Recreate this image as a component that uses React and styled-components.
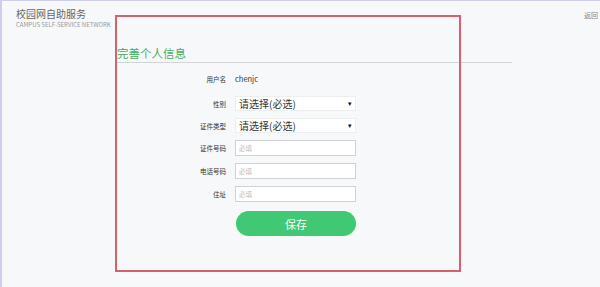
import styled, { createGlobalStyle } from "styled-components";

const Global = createGlobalStyle`
  html, body {
    margin: 0;
    padding: 0;
    background: #f6f8f9;
    font-family: "Noto Sans CJK SC", "Noto Sans", sans-serif;
  }
  * { box-sizing: border-box; }
`;

export default () => {
  return (
    <Page>
      <Global />
      <Header>
        <Brand>
          <BrandTitle>校园网自助服务</BrandTitle>
          <BrandSub>CAMPUS SELF-SERVICE NETWORK</BrandSub>
        </Brand>
        <Back>返回</Back>
      </Header>

      <Main>
        <Title>完善个人信息</Title>
        <Form>
          <Row first>
            <Label>用户名</Label>
            <Value>chenjc</Value>
          </Row>
          <Row>
            <Label>性别</Label>
            <Select>
              请选择(必选)
              <Caret>▾</Caret>
            </Select>
          </Row>
          <Row>
            <Label>证件类型</Label>
            <Select>
              请选择(必选)
              <Caret>▾</Caret>
            </Select>
          </Row>
          <Row>
            <Label>证件号码</Label>
            <Input placeholder="必填" />
          </Row>
          <Row>
            <Label>电话号码</Label>
            <Input placeholder="必填" />
          </Row>
          <Row>
            <Label>住址</Label>
            <Input placeholder="必填" />
          </Row>
          <Row>
            <Label />
            <SaveBtn>保存</SaveBtn>
          </Row>
        </Form>
      </Main>

      <Highlight />
    </Page>
  );
};

const Page = styled.div`
  position: relative;
  width: 600px;
  height: 287px;
  overflow: hidden;
  border-top: 1px solid #cfcdec;
  border-left: 2px solid #cfcdec;
  background: #f6f8f9;
`;

const Header = styled.div`
  display: flex;
  justify-content: space-between;
  align-items: flex-start;
  padding: 6px 2px 0 14px;
`;

const Brand = styled.div`
  display: flex;
  flex-direction: column;
`;

const BrandTitle = styled.div`
  font-size: 10px;
  line-height: 14px;
  color: #666;
`;

const BrandSub = styled.div`
  font-size: 6px;
  line-height: 8px;
  color: #999;
`;

const Back = styled.div`
  font-size: 7px;
  line-height: 10px;
  margin-top: 3px;
  color: #888;
  width: 14px;
  overflow: hidden;
  white-space: nowrap;
`;

const Main = styled.div`
  margin-left: 115px;
  width: 395px;
  padding-top: 16px;
`;

const Title = styled.div`
  font-size: 11.5px;
  line-height: 16px;
  color: #44ad62;
  padding-bottom: 1px;
  border-bottom: 1px solid #d2d4d6;
`;

const Form = styled.div`
  display: flex;
  flex-direction: column;
  gap: 7px;
  margin-top: 8px;
`;

const Row = styled.div`
  display: grid;
  grid-template-columns: 109px 121px;
  column-gap: 9px;
  align-items: center;
  margin-bottom: ${(p) => (p.first ? "2px" : "0")};
  &:last-child {
    margin-top: 2px;
  }
`;

const Label = styled.div`
  font-size: 6.5px;
  color: #333;
  text-align: right;
`;

const Value = styled.div`
  font-size: 7.5px;
  line-height: 16px;
  color: #333;
`;

const Select = styled.div`
  position: relative;
  height: 15px;
  background: #fff;
  border: 1px solid #eceeef;
  font-size: 10px;
  line-height: 13px;
  color: #333;
  padding-left: 3px;
`;

const Caret = styled.span`
  position: absolute;
  right: 3px;
  top: 0;
  font-size: 7px;
  color: #111;
`;

const Input = styled.input`
  height: 16px;
  width: 100%;
  background: #fff;
  border: 1px solid #cfd2d4;
  font-family: "Noto Sans CJK SC", "Noto Sans", sans-serif;
  font-size: 6.5px;
  padding: 0 3px;
  outline: none;
  &::placeholder {
    color: #bbb;
  }
`;

const SaveBtn = styled.button`
  height: 25px;
  width: 120px;
  margin-left: 1px;
  border: none;
  border-radius: 13px;
  background: #40c874;
  color: #fff;
  font-family: "Noto Sans CJK SC", "Noto Sans", sans-serif;
  font-size: 11px;
`;

const Highlight = styled.div`
  position: absolute;
  left: 113px;
  top: 14px;
  width: 346px;
  height: 257px;
  border: 2px solid #d6606b;
  pointer-events: none;
`;
